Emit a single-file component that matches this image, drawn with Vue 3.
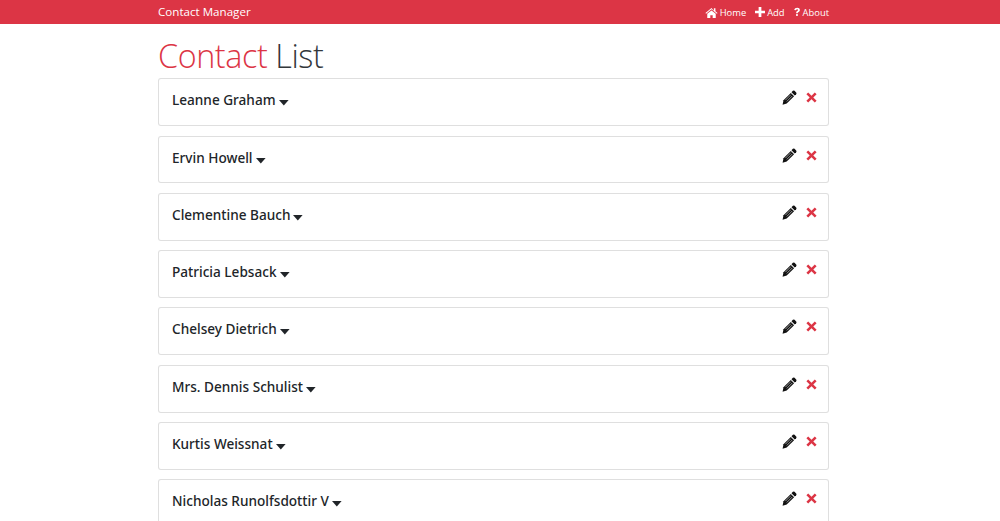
<script setup>
const contacts = [
  'Leanne Graham',
  'Ervin Howell',
  'Clementine Bauch',
  'Patricia Lebsack',
  'Chelsey Dietrich',
  'Mrs. Dennis Schulist',
  'Kurtis Weissnat',
  'Nicholas Runolfsdottir V'
]
</script>

<template>
  <div class="page">
    <nav class="navbar">
      <div class="container nav-inner">
        <a class="brand">Contact Manager</a>
        <ul class="links">
          <li>
            <svg class="nav-icon home" viewBox="0 0 16 14"><path d="M8 1.2 .3 7.6l.8 1L8 2.9l6.9 5.7.8-1-2.7-2.2V1.6h-2v3.1zM2.6 8.7V14h3.9v-3.6h3V14h3.9V8.7L8 4.3z" fill="#fff"/></svg>
            Home
          </li>
          <li>
            <svg class="nav-icon plus" viewBox="0 0 11 11"><path d="M4 0h3v4h4v3H7v4H4V7H0V4h4z" fill="#fff"/></svg>
            Add
          </li>
          <li>
            <svg class="nav-icon q" viewBox="0 0 8 12"><path d="M.3 3.2C.8 1.2 2.2.2 4.2.2c2.2 0 3.6 1.2 3.6 3 0 1.4-.8 2.1-1.7 2.7-.8.5-1.1.8-1.1 1.6H2.9c0-1.5.5-2.2 1.4-2.8.7-.5 1.1-.8 1.1-1.4 0-.7-.5-1.1-1.2-1.1-.8 0-1.3.5-1.6 1.3zM2.9 8.6H5v2.6H2.9z" fill="#fff"/></svg>
            About
          </li>
        </ul>
      </div>
    </nav>

    <main class="content">
      <div class="container">
        <h1 class="title"><span class="accent">Contact</span> List</h1>
        <article v-for="name in contacts" :key="name" class="card">
          <h4 class="name">
            {{ name }}
            <svg class="caret" viewBox="0 0 10 6"><path d="M0 0h9.6L4.8 5.4z" fill="#212529"/></svg>
          </h4>
          <div class="actions">
            <svg class="pencil" viewBox="0 0 16 16">
              <path d="M11.6.9a1.3 1.3 0 0 1 1.8 0l1.7 1.7a1.3 1.3 0 0 1 0 1.8l-1.5 1.5-3.5-3.5z" fill="#111"/>
              <path d="M9.4 3.1 12.9 6.6 5 14.5.6 15.6l1-4.6z" fill="#111"/>
              <path d="M9.5 4.9 3.6 10.8M11 6.3 5.1 12.2" stroke="#fff" stroke-width=".6" fill="none"/>
            </svg>
            <svg class="cross" viewBox="0 0 11 11"><path d="M2.2.4 5.5 3.7 8.8.4l1.8 1.8L7.3 5.5l3.3 3.3-1.8 1.8-3.3-3.3-3.3 3.3L.4 8.8l3.3-3.3L.4 2.2z" fill="#dc3545"/></svg>
          </div>
        </article>
      </div>
    </main>
  </div>
</template>

<style>
html, body { margin: 0; height: 100%; overflow: hidden; background: #fff; }
</style>

<style scoped>
.page {
  height: 521px;
  overflow: hidden;
  font-family: "Open Sans", "Noto Sans", sans-serif;
  color: #212529;
}
.container {
  width: 671px;
  margin: 0 auto;
}
.navbar {
  height: 24px;
  padding-right: 13px;
  background: #dc3545;
  color: #fff;
}
.content {
  padding-right: 13px;
}
.nav-inner {
  display: flex;
  align-items: center;
  justify-content: space-between;
  height: 24px;
}
.brand {
  font-size: 11.6px;
  margin-top: -1px;
}
.links {
  display: flex;
  gap: 9px;
  list-style: none;
  margin: 0;
  padding: 0;
  font-size: 9.4px;
}
.links li {
  display: flex;
  align-items: center;
  gap: 2px;
}
.nav-icon { display: block; }
.home { width: 13px; height: 11px; }
.plus { width: 10px; height: 10px; }
.q { width: 6px; height: 10px; margin-right: 1px; }
.title {
  margin: 11px 0 0;
  height: 43.25px;
  line-height: 40px;
  font-size: 32.3px;
  font-weight: 300;
  color: #33373b;
  letter-spacing: -0.4px;
}
.accent { color: #dc3545; }
.card {
  box-sizing: border-box;
  height: 47.8px;
  margin-bottom: 9.5px;
  padding: 0 11px 0 13px;
  border: 1px solid rgba(0, 0, 0, 0.125);
  border-radius: 3px;
  display: flex;
  justify-content: space-between;
  background: #fff;
}
.name {
  margin: 0;
  font-family: "Noto Sans", "Open Sans", sans-serif;
  font-size: 13.6px;
  font-weight: 500;
  display: flex;
  align-items: center;
  gap: 3px;
  height: 41px;
}
.caret { width: 10px; height: 6px; margin-top: 7px; }
.actions {
  display: flex;
  align-items: flex-start;
  gap: 9px;
  padding-top: 11px;
}
.pencil { width: 15px; height: 15px; display: block; }
.cross { width: 11px; height: 11px; display: block; margin-top: 2px; }
</style>
